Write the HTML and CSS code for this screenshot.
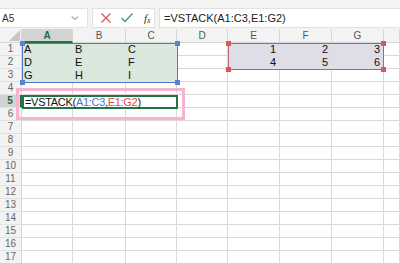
FILE: index.html
```html
<!DOCTYPE html>
<html>
<head>
<meta charset="utf-8">
<link rel="stylesheet" href="styles.css">
</head>
<body>
<div class="app">
  <div class="fbar">
    <div class="namebox"><span>A5</span><svg class="caret" width="8" height="6" viewBox="0 0 8 6"><path d="M1 1.5 L4 4.5 L7 1.5" fill="none" stroke="#666" stroke-width="1"/></svg></div>
    <div class="btns">
      <svg width="12" height="12" viewBox="0 0 12 12"><path d="M1.5 1.5 L10.5 10.5 M10.5 1.5 L1.5 10.5" stroke="#e0575a" stroke-width="1.3" fill="none"/></svg>
      <svg width="14" height="12" viewBox="0 0 14 12"><path d="M1.5 6 L5 9.5 L12.5 1.5" stroke="#3f9a5d" stroke-width="1.3" fill="none"/></svg>
      <span class="fx">f<sub>x</sub></span>
    </div>
    <div class="finput">=VSTACK(A1:C3,E1:G2)</div>
  </div>
  <div class="sheet">
    <div class="grid">
      <div class="corner"><svg width="12" height="12" viewBox="0 0 12 12"><path d="M12 1 L12 12 L1 12 Z" fill="#c6c6c6"/></svg></div>
      <div class="ch sel">A</div><div class="ch">B</div><div class="ch">C</div><div class="ch">D</div><div class="ch">E</div><div class="ch">F</div><div class="ch">G</div><div class="ch last"></div>

      <div class="rh">1</div><div class="c g">A</div><div class="c g">B</div><div class="c g">C</div><div class="c"></div><div class="c p n">1</div><div class="c p n">2</div><div class="c p n">3</div><div class="c last"></div>
      <div class="rh">2</div><div class="c g">D</div><div class="c g">E</div><div class="c g">F</div><div class="c"></div><div class="c p n">4</div><div class="c p n">5</div><div class="c p n">6</div><div class="c last"></div>
      <div class="rh">3</div><div class="c g">G</div><div class="c g">H</div><div class="c g">I</div><div class="c"></div><div class="c"></div><div class="c"></div><div class="c"></div><div class="c last"></div>
      <div class="rh">4</div><div class="c"></div><div class="c"></div><div class="c"></div><div class="c"></div><div class="c"></div><div class="c"></div><div class="c"></div><div class="c last"></div>
      <div class="rh sel">5</div><div class="c"></div><div class="c"></div><div class="c"></div><div class="c"></div><div class="c"></div><div class="c"></div><div class="c"></div><div class="c last"></div>
      <div class="rh">6</div><div class="c"></div><div class="c"></div><div class="c"></div><div class="c"></div><div class="c"></div><div class="c"></div><div class="c"></div><div class="c last"></div>
      <div class="rh">7</div><div class="c"></div><div class="c"></div><div class="c"></div><div class="c"></div><div class="c"></div><div class="c"></div><div class="c"></div><div class="c last"></div>
      <div class="rh">8</div><div class="c"></div><div class="c"></div><div class="c"></div><div class="c"></div><div class="c"></div><div class="c"></div><div class="c"></div><div class="c last"></div>
      <div class="rh">9</div><div class="c"></div><div class="c"></div><div class="c"></div><div class="c"></div><div class="c"></div><div class="c"></div><div class="c"></div><div class="c last"></div>
      <div class="rh">10</div><div class="c"></div><div class="c"></div><div class="c"></div><div class="c"></div><div class="c"></div><div class="c"></div><div class="c"></div><div class="c last"></div>
      <div class="rh">11</div><div class="c"></div><div class="c"></div><div class="c"></div><div class="c"></div><div class="c"></div><div class="c"></div><div class="c"></div><div class="c last"></div>
      <div class="rh">12</div><div class="c"></div><div class="c"></div><div class="c"></div><div class="c"></div><div class="c"></div><div class="c"></div><div class="c"></div><div class="c last"></div>
      <div class="rh">13</div><div class="c"></div><div class="c"></div><div class="c"></div><div class="c"></div><div class="c"></div><div class="c"></div><div class="c"></div><div class="c last"></div>
      <div class="rh">14</div><div class="c"></div><div class="c"></div><div class="c"></div><div class="c"></div><div class="c"></div><div class="c"></div><div class="c"></div><div class="c last"></div>
      <div class="rh">15</div><div class="c"></div><div class="c"></div><div class="c"></div><div class="c"></div><div class="c"></div><div class="c"></div><div class="c"></div><div class="c last"></div>
      <div class="rh">16</div><div class="c"></div><div class="c"></div><div class="c"></div><div class="c"></div><div class="c"></div><div class="c"></div><div class="c"></div><div class="c last"></div>
      <div class="rh">17</div><div class="c"></div><div class="c"></div><div class="c"></div><div class="c"></div><div class="c"></div><div class="c"></div><div class="c"></div><div class="c last"></div>
    </div>
    <div class="range blue"><i class="h tl"></i><i class="h tr"></i><i class="h bl"></i><i class="h br"></i></div>
    <div class="range red"><i class="h tl"></i><i class="h tr"></i><i class="h bl"></i><i class="h br"></i></div>
    <div class="edit">=VSTACK(<span class="rb">A1:C3</span>,<span class="rr">E1:G2</span>)</div>
    <div class="pink"></div>
  </div>
</div>
</body>
</html>
```
FILE: styles.css
```css
html, body { margin: 0; padding: 0; }
body { width: 400px; height: 263px; overflow: hidden; background: #fff; font-family: "Liberation Sans", Arial, sans-serif; }
.app { width: 400px; height: 263px; overflow: hidden; }
.fbar { height: 29px; background: #f3f3f3; box-sizing: border-box; padding-top: 8px; display: flex; gap: 4px; align-items: flex-start; }
.namebox { width: 88px; height: 20px; box-sizing: border-box; background: #fff; border: 1px solid #e1e1e1; border-left: none; display: flex; align-items: center; justify-content: space-between; padding: 0 8px 0 2px; font-size: 10px; color: #333; }
.btns { width: 63px; height: 20px; box-sizing: border-box; background: #fff; border: 1px solid #e1e1e1; display: flex; align-items: center; gap: 8px; padding-left: 7px; }
.fx { font-family: "Liberation Serif", serif; font-style: italic; font-size: 11px; color: #333; margin-left: 2px; }
.fx sub { font-size: 8px; vertical-align: -1px; }
.finput { flex: 1; height: 20px; box-sizing: border-box; background: #fff; border: 1px solid #e1e1e1; border-right: none; font-size: 11px; color: #222; padding-left: 4px; line-height: 18px; }
.sheet { position: relative; }
.grid { display: grid; grid-template-columns: 22px 51px 53px 51px 51px 52px 52px 52px 16px; grid-template-rows: 14px repeat(17, 13px); }
.corner { background: #f3f3f3; border-right: 1px solid #d6d6d6; border-bottom: 1px solid #d6d6d6; box-sizing: border-box; display: flex; align-items: flex-end; justify-content: flex-end; padding: 0 1px 1px 0; }
.ch { background: #f3f3f3; border-right: 1px solid #d6d6d6; border-bottom: 1px solid #d6d6d6; box-sizing: border-box; font-size: 10px; color: #555; text-align: center; line-height: 13px; }
.ch.sel { background: #d3d3d3; color: #1e6b41; font-weight: bold; border-bottom: 2px solid #217346; }
.rh { background: #f3f3f3; border-right: 1px solid #d6d6d6; border-bottom: 1px solid #e2e2e2; box-sizing: border-box; font-size: 10px; color: #666; text-align: center; line-height: 12px; }
.rh.sel { background: #d3d3d3; color: #1e6b41; font-weight: bold; border-right: 2px solid #217346; }
.c { border-right: 1px solid #d9d9d9; border-bottom: 1px solid #d9d9d9; box-sizing: border-box; font-size: 11px; color: #111; line-height: 13px; padding-left: 2px; }
.c.g { background: #d9e7dd; border-color: #d9e7dd; }
.c.p { background: #dedde8; border-color: #dedde8; }
.c.n { text-align: right; padding-right: 3px; }
.range { position: absolute; box-sizing: border-box; }
.range.blue { left: 22px; top: 14px; width: 156px; height: 40px; border: 1.5px solid #4f78c8; }
.range.red { left: 228px; top: 14px; width: 156px; height: 27px; border: 1.5px solid #d9535b; border-left-color: #b86a70; }
.h { position: absolute; width: 5px; height: 5px; }
.blue .h { background: #5a82d0; }
.red .h { background: #e0555c; }
.tl { left: -3px; top: -3px; }
.tr { right: -3px; top: -3px; }
.bl { left: -3px; bottom: -3px; }
.br { right: -3px; bottom: -3px; }
.edit { position: absolute; left: 22px; top: 66px; width: 156px; height: 14px; box-sizing: border-box; border: 2px solid #217346; background: #fff; font-size: 11px; line-height: 10px; color: #111; padding-left: 1px; letter-spacing: -0.3px; }
.rb { color: #4a77c9; }
.rr { color: #d9484f; }
.pink { position: absolute; left: 16px; top: 59px; width: 169px; height: 32px; box-sizing: border-box; border: 3px solid #f6b4cf; }
```
